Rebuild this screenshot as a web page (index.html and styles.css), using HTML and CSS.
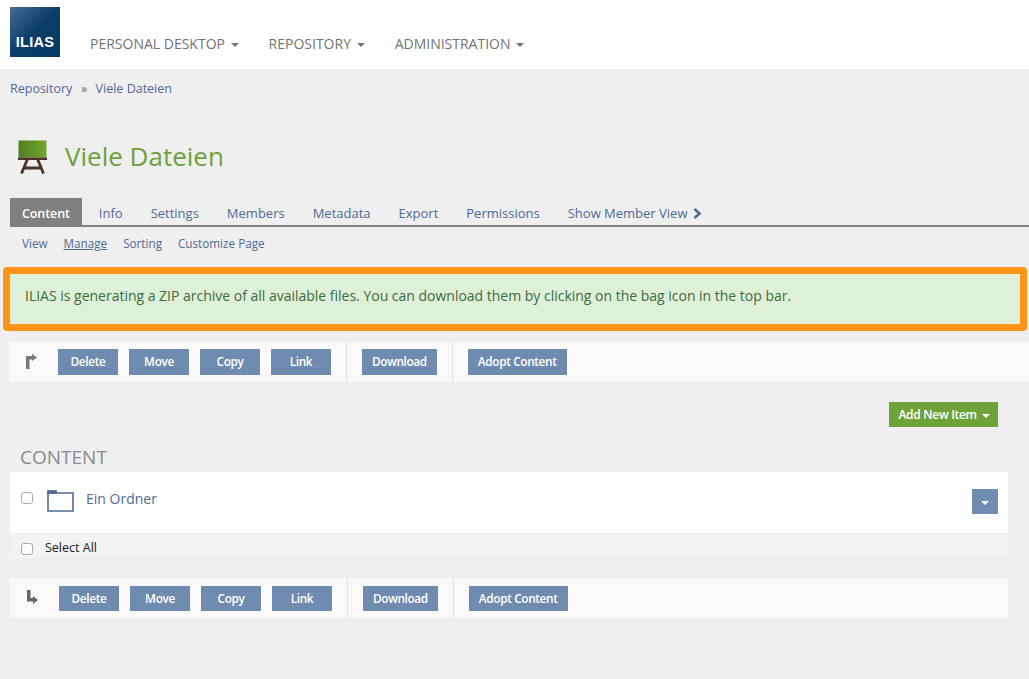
FILE: index.html
```html
<!DOCTYPE html>
<html lang="en">
<head>
<meta charset="utf-8">
<title>Viele Dateien</title>
<link rel="stylesheet" href="styles.css">
</head>
<body>
<header class="topbar">
  <div class="logo">ILIAS</div>
  <nav class="mainnav">
    <a>PERSONAL DESKTOP <span class="caret"></span></a>
    <a>REPOSITORY <span class="caret"></span></a>
    <a>ADMINISTRATION <span class="caret"></span></a>
  </nav>
</header>
<div class="breadcrumb"><a>Repository</a><span class="sep">»</span><a>Viele Dateien</a></div>
<div class="title">
  <svg class="title-icon" width="32" height="36" viewBox="0 0 32 36">
    <defs><linearGradient id="board" x1="0" x2="1" y1="0" y2="0"><stop offset="0" stop-color="#4f7f22"/><stop offset="1" stop-color="#74a62f"/></linearGradient></defs>
    <rect x="1.5" y="2.5" width="28" height="17" fill="url(#board)"/>
    <rect x="1" y="19.5" width="29" height="2.5" fill="#4f3226"/>
    <path d="M10.5 21 L4.5 35.5 M20.5 21 L26.5 35.5 M7.5 30 H23.5" stroke="#4f3226" stroke-width="2.8" fill="none"/>
  </svg>
  <h1>Viele Dateien</h1>
</div>
<ul class="tabs">
  <li class="active">Content</li><li>Info</li><li>Settings</li><li>Members</li><li>Metadata</li><li>Export</li><li>Permissions</li>
  <li>Show Member View <svg class="chev" width="9" height="11" viewBox="0 0 9 11"><path d="M1.5 1 L6.5 5.5 L1.5 10" stroke="#4f6a95" stroke-width="2.6" fill="none"/></svg></li>
</ul>
<ul class="subtabs"><li>View</li><li class="current">Manage</li><li>Sorting</li><li>Customize Page</li></ul>
<div class="message">ILIAS is generating a ZIP archive of all available files. You can download them by clicking on the bag icon in the top bar.</div>
<div class="toolbar toolbar-top">
  <svg class="arrow" width="11" height="15" viewBox="0 0 11 15"><path d="M0 15 V2 H6 V0 L11 3.5 L6 7 V5.5 H3.5 V15 Z" fill="#777"/></svg>
  <div class="group"><button>Delete</button><button>Move</button><button>Copy</button><button>Link</button></div>
  <div class="group"><button>Download</button></div>
  <div class="group"><button>Adopt Content</button></div>
</div>
<div class="addrow"><button class="add">Add New Item <span class="caret"></span></button></div>
<h2 class="heading">CONTENT</h2>
<div class="list">
  <div class="item">
    <input type="checkbox" class="check">
    <svg class="folder" width="27" height="22" viewBox="0 0 27 22"><path d="M1 1 H9 V3 H26 V21 H1 Z" fill="#fff" stroke="#4f6a95" stroke-width="1.6"/><rect x="0.5" y="0.5" width="9" height="3.5" fill="#4f6a95"/></svg>
    <a class="name">Ein Ordner</a>
    <button class="drop"><span class="caret"></span></button>
  </div>
  <label class="selectall"><input type="checkbox" class="check">Select All</label>
</div>
<div class="toolbar toolbar-bottom">
  <svg class="arrow arrow-down" width="11" height="14" viewBox="0 0 11 14"><path d="M0 0 H3.5 V8 H6 V6 L11 10 L6 14 V11.5 H0 Z" fill="#666"/></svg>
  <div class="group"><button>Delete</button><button>Move</button><button>Copy</button><button>Link</button></div>
  <div class="group"><button>Download</button></div>
  <div class="group"><button>Adopt Content</button></div>
</div>
</body>
</html>
```
FILE: styles.css
```css
* { box-sizing: border-box; }
html, body { margin: 0; padding: 0; height: 100%; overflow: hidden; }
body { background: #efefef; font-family: "Open Sans", sans-serif; font-size: 13px; color: #333; }
ul { list-style: none; margin: 0; padding: 0; }
button { font-family: inherit; border: 0; cursor: pointer; }

.topbar { height: 69px; background: #fff; display: flex; padding: 7px 0 0 10px; }
.logo { width: 50px; height: 50px; background: linear-gradient(135deg, #456b92 0%, #0b3d69 50%, #033b66 100%); color: #fff; font-family: "Liberation Sans", sans-serif; font-weight: 700; font-size: 14.5px; letter-spacing: .3px; display: flex; align-items: flex-end; justify-content: center; padding-bottom: 7px; line-height: 15px; }
.mainnav { display: flex; gap: 30px; margin-left: 30px; padding-top: 27px; font-size: 14px; line-height: 20px; color: #737373; }
.caret { display: inline-block; width: 0; height: 0; margin-left: 2px; vertical-align: middle; border-top: 4px solid currentColor; border-left: 4px solid transparent; border-right: 4px solid transparent; }

.breadcrumb { padding: 11px 0 0 10px; line-height: 18px; font-size: 12.5px; color: #4f6a95; }
.breadcrumb .sep { margin: 0 8.5px; color: #4f6a95; }

.title { display: flex; align-items: center; margin-top: 40px; padding-left: 17px; height: 36px; }
.title h1 { margin: 0 0 0 16px; font-size: 26px; font-weight: 400; line-height: 36px; color: #6ea03c; }

.tabs { display: flex; margin: 24px 0 0 10px; height: 29px; border-bottom: 2px solid #808080; font-size: 13px; color: #4f6a95; line-height: 31px; }
.tabs li { padding: 0 12px; margin-right: 4px; height: 27px; }
.tabs .active { background: #808080; color: #fff; font-weight: 600; font-size: 12.5px; letter-spacing: -.1px; margin-right: 5px; }
.chev { vertical-align: -1px; margin-left: 2px; }

.subtabs { display: flex; gap: 16px; margin: 8px 0 0 22px; font-size: 11.7px; line-height: 16px; color: #4f6a95; }
.subtabs .current { text-decoration: underline; }

.message { margin: 16px 2px 0 3px; height: 64px; border: 7px solid #ff9518; border-radius: 4px; background: #dff0d8; box-shadow: inset 0 -2px 0 #e8f0e0; padding: 0 0 0 15px; line-height: 44px; font-size: 14px; letter-spacing: -.01px; color: #3c6b3d; }

.toolbar { display: flex; align-items: center; height: 40px; background: #f9f9f9; }
.toolbar-top { margin: 11px 0 0 9px; }
.toolbar-bottom { margin: 20px 21px 0 10px; }
.arrow { margin: 0 0 1px 17px; }
.arrow-down { margin-bottom: 2px; }
.group { display: flex; gap: 11px; height: 40px; align-items: center; padding: 0 15px; border-right: 1px solid #e0e0e0; }
.toolbar .group:first-of-type { margin-left: 6px; }
.group:last-child { border-right: 0; }
.group button { height: 26px; padding: 0 10px 1px; min-width: 60px; background: #6f8bb0; color: #fff; font-size: 11.8px; font-weight: 600; letter-spacing: -.35px; line-height: 25px; }
.toolbar-bottom .group button { height: 25px; margin-top: 1px; padding-bottom: 0; }

.addrow { display: flex; justify-content: flex-end; padding: 20px 31px 0 0; }
.add { height: 25px; width: 109px; padding: 0 0 0 1px; background: #6fa33a; color: #fff; font-size: 12px; font-weight: 600; letter-spacing: -.3px; }

.heading { margin: 17px 0 0 20px; font-size: 19px; line-height: 26px; font-weight: 400; color: #8a8a8a; }

.list { margin: 2px 21px 0 10px; }
.item { position: relative; height: 62px; background: #fff; display: flex; align-items: flex-start; padding: 0 10px 0 11px; border-bottom: 1px solid #eeeeee; }
.check { appearance: none; width: 12px; height: 12px; margin: 0; background: #fff; border: 1px solid #a9a9a9; border-radius: 3px; }
.item .check { margin: 20px 1px 0 0; }
.folder { margin: 18px 0 0 13px; }
.name { margin: 17px 0 0 12px; font-size: 14px; line-height: 20px; color: #4f6a95; }
.drop { position: absolute; right: 10px; top: 17px; width: 26px; height: 25px; padding: 0; background: #6f8bb0; color: #fff; }
.drop .caret { margin: 0; }
.selectall { display: flex; align-items: center; height: 24px; background: #f3f3f3; padding: 2px 0 0 11px; font-size: 12.5px; color: #222; }
.selectall .check { margin: 3px 12px 0 0; }
```
